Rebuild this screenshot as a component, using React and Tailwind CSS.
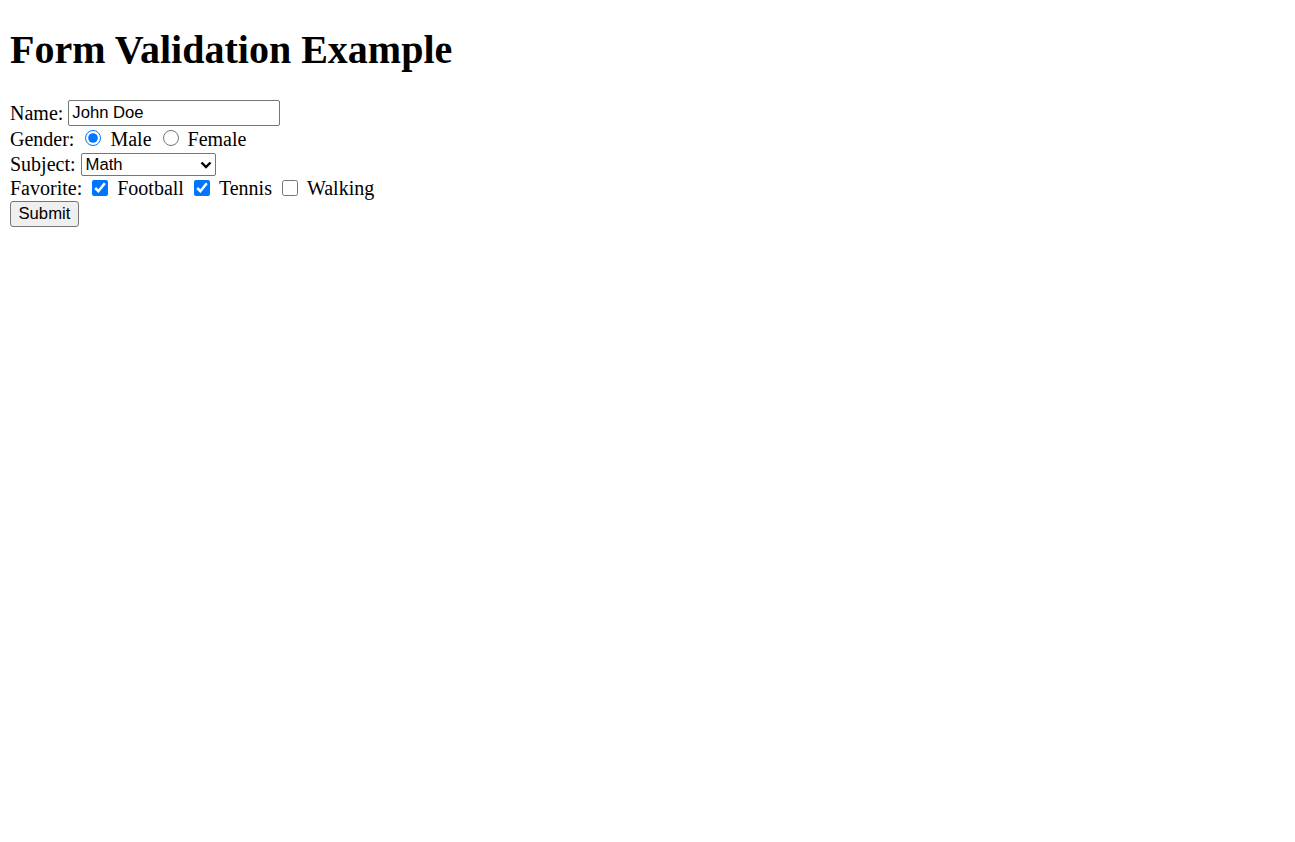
import { useState } from 'react';

const controlFont = "font-['Liberation_Sans',Arial,sans-serif] text-[16.67px]";

function Radio({ name, value, checked, onChange }) {
    return (
        <input
            type="radio"
            name={name}
            value={value}
            checked={checked}
            onChange={onChange}
            className="self-start mt-[3px] ml-[11px] w-4 h-4 accent-[#0075ff]"
        />
    );
}

function Check({ checked, onChange }) {
    return (
        <input
            type="checkbox"
            checked={checked}
            onChange={onChange}
            className="self-start mt-[3px] ml-[10px] w-4 h-4 accent-[#0075ff]"
        />
    );
}

export default function App() {
    const [name, setName] = useState('John Doe');
    const [gender, setGender] = useState('male');
    const [subject, setSubject] = useState('math');
    const [fav, setFav] = useState({ football: true, tennis: true, walking: false });

    const toggle = (key) => setFav({ ...fav, [key]: !fav[key] });

    return (
        <div className="min-h-screen bg-white px-[10px] text-black font-['Liberation_Serif','Times_New_Roman',serif] text-[20px] leading-[23px]">
            <h1 className="mt-[26.8px] mb-[26.8px] text-[40px] leading-[46px] font-bold">Form Validation Example</h1>

            <form onSubmit={(e) => e.preventDefault()}>
                <div className="flex items-center h-[27px]">
                    <span>Name:</span>
                    <input
                        value={name}
                        onChange={(e) => setName(e.target.value)}
                        className={`ml-[5px] w-[212px] h-[26px] px-[3px] border border-[#767676] rounded-[2px] bg-white outline-none ${controlFont}`}
                    />
                </div>

                <div className="flex items-center h-[25px]">
                    <span>Gender:</span>
                    <Radio name="gender" value="male" checked={gender === 'male'} onChange={() => setGender('male')} />
                    <span className="ml-[9px]">Male</span>
                    <Radio name="gender" value="female" checked={gender === 'female'} onChange={() => setGender('female')} />
                    <span className="ml-[9px]">Female</span>
                </div>

                <div className="flex items-center h-[25px]">
                    <span>Subject:</span>
                    <div className="relative ml-[5px]">
                        <select
                            value={subject}
                            onChange={(e) => setSubject(e.target.value)}
                            className={`appearance-none block w-[135px] h-[23px] pl-[4px] border border-[#767676] rounded-[2px] bg-white leading-[21px] ${controlFont}`}
                        >
                            <option value="math">Math</option>
                            <option value="science">Science</option>
                            <option value="english">English</option>
                        </select>
                        <svg className="absolute right-[4px] top-[8px] pointer-events-none" width="12" height="8" viewBox="0 0 12 8">
                            <path d="M1.5 1.5 L6 6 L10.5 1.5" fill="none" stroke="#000" strokeWidth="2.4" />
                        </svg>
                    </div>
                </div>

                <div className="flex items-center h-[24px]">
                    <span>Favorite:</span>
                    <Check checked={fav.football} onChange={() => toggle('football')} />
                    <span className="ml-[9px]">Football</span>
                    <Check checked={fav.tennis} onChange={() => toggle('tennis')} />
                    <span className="ml-[9px]">Tennis</span>
                    <Check checked={fav.walking} onChange={() => toggle('walking')} />
                    <span className="ml-[9px]">Walking</span>
                </div>

                <div className="flex items-center h-[27px]">
                    <button
                        type="submit"
                        className={`h-[26px] px-[7.5px] border border-[#767676] rounded-[3px] bg-[#efefef] leading-[20px] ${controlFont}`}
                    >
                        Submit
                    </button>
                </div>
            </form>
        </div>
    );
}
